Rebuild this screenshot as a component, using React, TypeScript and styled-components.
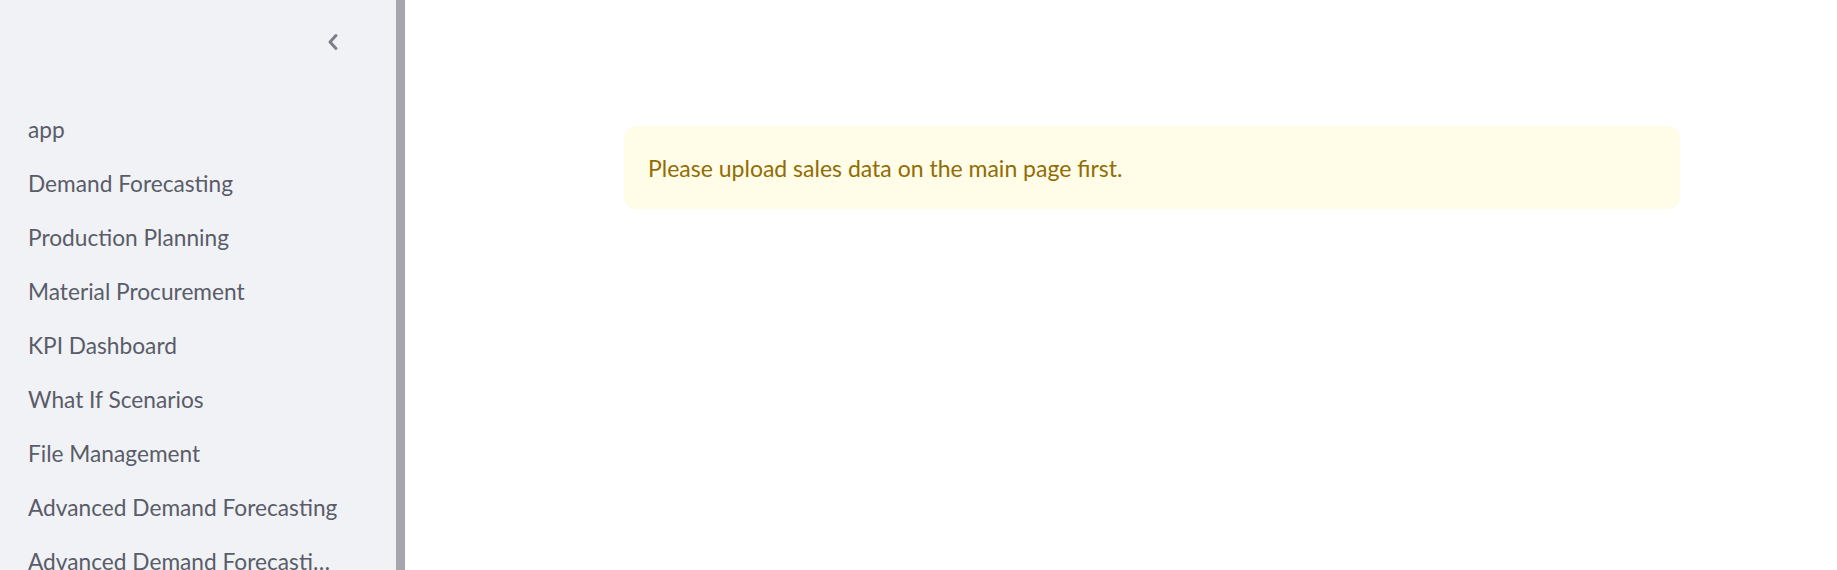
import React from "react";
import styled, { createGlobalStyle } from "styled-components";

const GlobalStyle = createGlobalStyle`
  html, body {
    margin: 0;
    padding: 0;
    height: 100%;
    overflow: hidden;
    background: #ffffff;
    font-family: Lato, "Noto Sans", "Liberation Sans", sans-serif;
  }
  #root { height: 100%; }
`;

const Shell = styled.div`
  display: flex;
  height: 570px;
  width: 100%;
  overflow: hidden;
`;

const Sidebar = styled.aside`
  display: flex;
  flex-direction: row;
  width: 405px;
  flex: 0 0 405px;
  background: #f0f2f6;
`;

const SidebarContent = styled.div`
  flex: 1;
  display: flex;
  flex-direction: column;
  min-width: 0;
  overflow: hidden;
`;

const ScrollThumb = styled.div`
  width: 9px;
  flex: 0 0 9px;
  background: #a5a6ae;
`;

const SidebarHeader = styled.div`
  height: 102px;
  flex: 0 0 102px;
  display: flex;
  align-items: flex-start;
  justify-content: flex-end;
  padding: 31px 52px 0 0;
  box-sizing: border-box;
`;

const CollapseButton = styled.button`
  border: none;
  background: transparent;
  padding: 0;
  width: 22px;
  height: 22px;
  display: flex;
  align-items: center;
  justify-content: center;
  cursor: pointer;
  color: #7c7e88;
`;

const NavList = styled.ul`
  list-style: none;
  margin: 0;
  padding: 0 57px 0 28px;
  display: flex;
  flex-direction: column;
`;

const NavItem = styled.li`
  height: 54px;
  display: flex;
  align-items: center;
  flex: 0 0 54px;
`;

const NavLabel = styled.span`
  font-size: 22.7px;
  color: #5a5c68;
  white-space: nowrap;
  overflow: hidden;
  text-overflow: ellipsis;
  max-width: 100%;
`;

const Main = styled.main`
  flex: 1;
  padding: 126px 157px 0 219px;
  box-sizing: border-box;
`;

const Alert = styled.div`
  background: #fffce7;
  border-radius: 12px;
  height: 83px;
  display: flex;
  align-items: center;
  padding: 0 24px;
  box-sizing: border-box;
`;

const AlertText = styled.p`
  margin: 0;
  font-size: 23px;
  color: #926c05;
`;

const pages = [
  "app",
  "Demand Forecasting",
  "Production Planning",
  "Material Procurement",
  "KPI Dashboard",
  "What If Scenarios",
  "File Management",
  "Advanced Demand Forecasting",
  "Advanced Demand Forecasting Pro",
];

export default function App() {
  return (
    <>
      <GlobalStyle />
      <Shell>
        <Sidebar>
          <SidebarContent>
            <SidebarHeader>
              <CollapseButton aria-label="Collapse sidebar">
                <svg width="14" height="20" viewBox="0 0 14 20" fill="none">
                  <path
                    d="M10 3.5 L4 10 L10 16.5"
                    stroke="currentColor"
                    strokeWidth="3"
                    strokeLinecap="round"
                    strokeLinejoin="round"
                  />
                </svg>
              </CollapseButton>
            </SidebarHeader>
            <NavList>
              {pages.map((p) => (
                <NavItem key={p}>
                  <NavLabel>{p}</NavLabel>
                </NavItem>
              ))}
            </NavList>
          </SidebarContent>
          <ScrollThumb />
        </Sidebar>
        <Main>
          <Alert>
            <AlertText>Please upload sales data on the main page first.</AlertText>
          </Alert>
        </Main>
      </Shell>
    </>
  );
}
